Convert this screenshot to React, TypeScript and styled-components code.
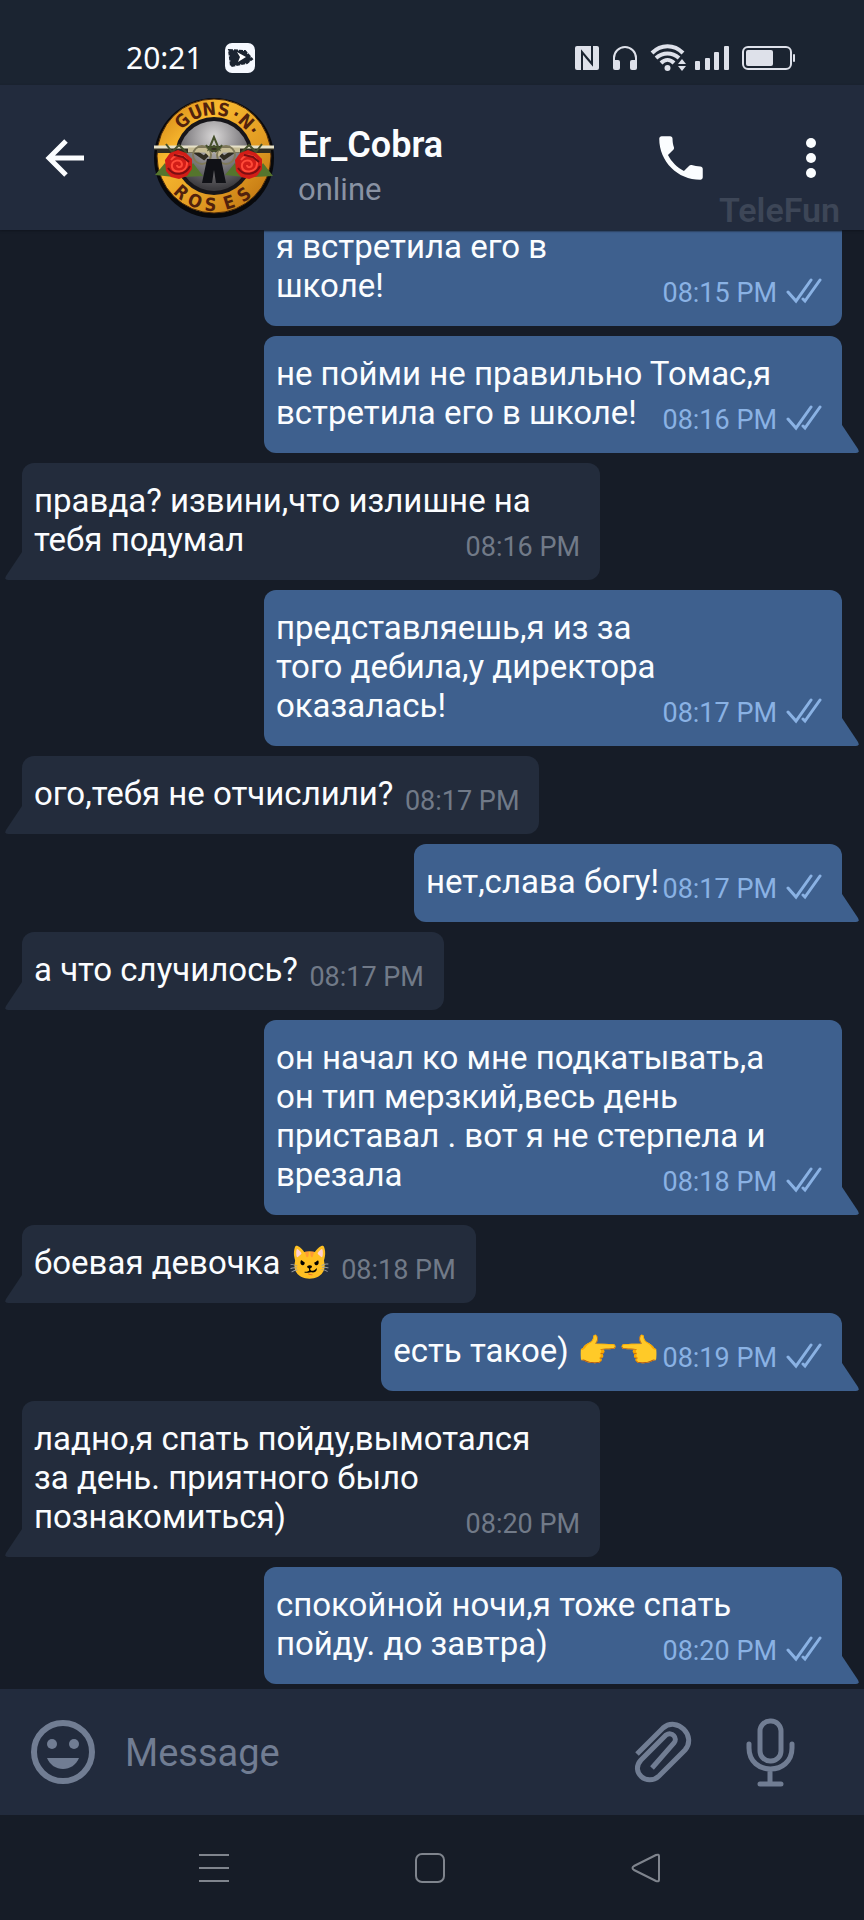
import React from "react";
import styled, { createGlobalStyle } from "styled-components";

const colors = {
  page: "#161c27",
  status: "#1b2431",
  bar: "#222b3d",
  incoming: "#232c3c",
  outgoing: "#3e608e",
  text: "#fbfdff",
  muted: "#717d93",
};

const GlobalStyle = createGlobalStyle`
  * { box-sizing: border-box; }
  body {
    margin: 0;
    background: ${colors.page};
    color: ${colors.text};
    font-family: Roboto, "Noto Sans", sans-serif;
  }
`;

const Screen = styled.div`
  display: flex;
  flex-direction: column;
  height: 100vh;
`;

const StatusBar = styled.div`
  display: flex;
  flex: none;
  align-items: center;
  justify-content: space-between;
  height: 85px;
  padding: 30px 68px 0 126px;
  background: ${colors.status};
`;

const StatusGroup = styled.div<{ $gap: number }>`
  display: flex;
  align-items: center;
  gap: ${({ $gap }) => $gap}px;
`;

const Clock = styled.time`
  font-family: "Noto Sans", sans-serif;
  font-size: 30px;
  line-height: 34px;
`;

const Header = styled.header`
  position: relative;
  z-index: 1;
  display: flex;
  flex: none;
  align-items: center;
  height: 145px;
  padding: 0 32px 0 36px;
  background: ${colors.bar};
  box-shadow: 0 1px 2px #10151e;
`;

const IconButton = styled.button`
  display: flex;
  flex: none;
  align-items: center;
  justify-content: center;
  padding: 0;
  border: 0;
  background: none;
  color: inherit;
`;

const Avatar = styled.svg`
  flex: none;
  margin-left: 62px;
`;

const Contact = styled.div`
  flex: 1;
  min-width: 0;
  margin-left: 24px;
  padding-top: 18px;
`;

const ContactName = styled.h1`
  margin: 0;
  font-size: 36px;
  font-weight: 600;
  line-height: 42px;
`;

const Presence = styled.p`
  margin: 0;
  padding-top: 4px;
  color: #8992a3;
  font-size: 31px;
  line-height: 40px;
`;

const HeaderActions = styled.div`
  display: flex;
  gap: 80px;
`;

const Watermark = styled.span`
  position: absolute;
  right: 24px;
  bottom: 0;
  color: #3d4657;
  font-size: 34px;
  font-weight: 600;
  line-height: 40px;
`;

const Scroller = styled.main`
  display: flex;
  flex: 1;
  flex-direction: column-reverse;
  min-height: 0;
  overflow-y: auto;
  scrollbar-width: none;
`;

const MessageList = styled.ol`
  display: flex;
  flex: none;
  flex-direction: column;
  gap: 10px;
  margin: 0;
  padding: 0 22px 5px;
  list-style: none;
`;

const Bubble = styled.li<{ $out: boolean; $wide: boolean }>`
  position: relative;
  display: grid;
  align-self: ${({ $out }) => ($out ? "flex-end" : "flex-start")};
  width: ${({ $wide }) => ($wide ? "70.5%" : "auto")};
  padding: 18px 20px 21px 12px;
  border-radius: 12px;
  background: ${({ $out }) => ($out ? colors.outgoing : colors.incoming)};
`;

const Tail = styled.svg<{ $out: boolean }>`
  position: absolute;
  bottom: 0;
  ${({ $out }) => ($out ? "right: -17px;" : "left: -17px; transform: scaleX(-1);")}
`;

const MessageText = styled.p<{ $reserve: number }>`
  grid-area: 1 / 1;
  justify-self: start;
  margin: 0;
  padding-right: ${({ $reserve }) => $reserve}px;
  font-size: 33px;
  line-height: 39px;
`;

const Meta = styled.div<{ $out: boolean }>`
  display: flex;
  grid-area: 1 / 1;
  align-items: flex-end;
  align-self: end;
  justify-self: end;
  gap: 9px;
  color: ${({ $out }) => ($out ? "#8ab2e4" : "#717a88")};
  font-size: 27px;
  line-height: 24px;
`;

const Composer = styled.form`
  display: flex;
  flex: none;
  align-items: center;
  height: 126px;
  padding: 0 68px 0 30px;
  background: ${colors.bar};
  color: ${colors.muted};
`;

const MessageInput = styled.input`
  flex: 1;
  min-width: 0;
  margin-left: 29px;
  padding: 2px 0 0;
  border: 0;
  outline: 0;
  background: none;
  color: ${colors.text};
  font-family: inherit;
  font-size: 38px;
  line-height: 44px;
  &::placeholder { color: ${colors.muted}; opacity: 1; }
`;

const ComposerActions = styled.div`
  display: flex;
  align-items: center;
  gap: 51px;
`;

const NavBar = styled.nav`
  display: flex;
  flex: none;
  align-items: center;
  justify-content: center;
  gap: 186px;
  height: 105px;
  padding-right: 4px;
  background: ${colors.page};
  color: #7f848d;
`;

type Message = { out?: boolean; time: string; lines: string[]; tail?: boolean };

const messages: Message[] = [
  { out: true, tail: false, time: "08:15 PM", lines: ["я встретила его в", "школе!"] },
  { out: true, time: "08:16 PM", lines: ["не пойми не правильно Томас,я", "встретила его в школе!"] },
  { time: "08:16 PM", lines: ["правда? извини,что излишне на", "тебя подумал"] },
  { out: true, time: "08:17 PM", lines: ["представляешь,я из за", "того дебила,у директора", "оказалась!"] },
  { time: "08:17 PM", lines: ["ого,тебя не отчислили?"] },
  { out: true, time: "08:17 PM", lines: ["нет,слава богу!"] },
  { time: "08:17 PM", lines: ["а что случилось?"] },
  {
    out: true,
    time: "08:18 PM",
    lines: ["он начал ко мне подкатывать,а", "он тип мерзкий,весь день", "приставал . вот я не стерпела и", "врезала"],
  },
  { time: "08:18 PM", lines: ["боевая девочка 😼"] },
  { out: true, time: "08:19 PM", lines: ["есть такое) 👉👈"] },
  { time: "08:20 PM", lines: ["ладно,я спать пойду,вымотался", "за день. приятного было", "познакомиться)"] },
  { out: true, time: "08:20 PM", lines: ["спокойной ночи,я тоже спать", "пойду. до завтра)"] },
];

function ReadTicks() {
  return (
    <svg width="36" height="28" viewBox="0 0 36 28" fill="none" stroke="currentColor" strokeWidth="3" strokeLinecap="round" role="img" aria-label="Read">
      <path d="m2 15 8 9L25 3M17 22l2 2L34 3" />
    </svg>
  );
}

function MessageBubble({ message }: { message: Message }) {
  const { out = false, tail = true, time, lines } = message;
  const wide = lines.length > 1;
  const reserve = wide ? 0 : out ? 163 : 126;
  return (
    <Bubble $out={out} $wide={wide}>
      <MessageText $reserve={reserve}>
        {lines.map((line, index) => (
          <React.Fragment key={index}>
            {index > 0 && <br />}
            {line}
          </React.Fragment>
        ))}
      </MessageText>
      <Meta $out={out}>
        <time>{time}</time>
        {out && <ReadTicks />}
      </Meta>
      {tail && (
        <Tail $out={out} width="30" height="28" viewBox="0 0 30 28" aria-hidden="true">
          <path d="M0 0H13L29 24Q31 28 27 28H0Z" fill={out ? colors.outgoing : colors.incoming} />
        </Tail>
      )}
    </Bubble>
  );
}

function Rose({ x }: { x: number }) {
  return (
    <g transform={`translate(${x} 68)`}>
      <path d="M-24 10-14-2-5 12ZM24 11 14-2 5 12Z" fill="#55752d" />
      <path d="M-14-5-9-12-1-15 7-12 13-6 13 4 8 11 0 14-8 12-13 6Z" fill="#d21d17" />
      <path d="M-8-5C-2-13 9-9 8-1 7 8-6 9-7 2-8-5 2-7 3-1 3 3-2 3-2 0" fill="none" stroke="#ff4a38" strokeWidth="2" />
      <path d="M-11 3C-5 12 7 10 11 1M-5-10 4-8 10-3" fill="none" stroke="#790e12" strokeWidth="2" />
    </g>
  );
}

const ringLetters: { char: string; angle: number; y: number }[] = [
  { char: "G", angle: -42, y: 14 },
  { char: "U", angle: -23, y: 14 },
  { char: "N", angle: -6, y: 14 },
  { char: "S", angle: 12, y: 14 },
  { char: "·", angle: 28, y: 14 },
  { char: "N", angle: 43, y: 14 },
  { char: "·", angle: 57, y: 14 },
  { char: "R", angle: 42, y: 110 },
  { char: "O", angle: 23, y: 110 },
  { char: "S", angle: 4, y: 110 },
  { char: "E", angle: -18, y: 110 },
  { char: "S", angle: -38, y: 110 },
];

function BandAvatar() {
  return (
    <Avatar width="120" height="122" viewBox="0 0 120 122" role="img" aria-label="Er_Cobra">
      <defs>
        <radialGradient id="skull" cx="50%" cy="22%" r="75%">
          <stop offset="0" stopColor="#d8d6d6" />
          <stop offset=".5" stopColor="#8b898c" />
          <stop offset="1" stopColor="#3c3b3f" />
        </radialGradient>
        <linearGradient id="gold" x2="1" y2="1">
          <stop offset="0" stopColor="#c9790f" />
          <stop offset=".3" stopColor="#f9b92f" />
          <stop offset=".65" stopColor="#e09a22" />
          <stop offset="1" stopColor="#b86a0c" />
        </linearGradient>
      </defs>
      <circle cx="60" cy="61" r="60" fill="#08090c" />
      <circle cx="60" cy="59" r="57" fill="url(#gold)" stroke="#4b2a0b" />
      <circle cx="60" cy="59" r="39" fill="#17161a" />
      <circle cx="60" cy="59" r="35" fill="url(#skull)" />
      <g fill="#51220d" fontFamily="DejaVu Sans Condensed, DejaVu Sans, sans-serif" fontSize="18" fontWeight="700" textAnchor="middle">
        {ringLetters.map(({ char, angle, y }) => (
          <text key={`${char}${angle}`} x="60" y={y + 4} transform={`rotate(${angle} 60 59)`}>
            {char}
          </text>
        ))}
      </g>
      <path d="M0 51H120M3 54H40L50 61 60 51 70 61 80 54H117" fill="none" stroke="#302c21" strokeWidth="4" />
      <path d="M0 50H44M76 50H120" stroke="#e6e1c8" strokeWidth="3" />
      <path d="M34 53h18l5 5M86 53H68l-5 5" fill="none" stroke="#c7bd95" strokeWidth="5" />
      <circle cx="48" cy="58" r="9" fill="none" stroke="#7f7959" strokeWidth="2" />
      <circle cx="72" cy="58" r="9" fill="none" stroke="#7f7959" strokeWidth="2" />
      <path d="m60 40-5 12 5-3 5 3Zm-8 8c5 8 11 8 16 0M12 47l6 8 7-7 8 8M108 47l-6 8-7-7-8 8" fill="none" stroke="#45502b" strokeWidth="2" />
      <path d="m53 62-5 24h10l2-13 2 13h10l-5-24Z" fill="#101116" />
      <Rose x={25} />
      <Rose x={95} />
    </Avatar>
  );
}

function StatusIcons() {
  return (
    <svg width="222" height="30" viewBox="0 0 222 30" role="img" aria-label="NFC, headphones, Wi-Fi, signal, battery">
      <g fill="#dee1ea">
        <rect x="1" y="3" width="24" height="24" rx="2" />
        <path d="M8 27V9l10 12M18 3v18l-6-7" fill="none" stroke={colors.status} strokeWidth="2" />
        <path d="M40 23V15a11 11 0 0 1 22 0v8" fill="none" stroke="#dee1ea" strokeWidth="2" />
        <rect x="39" y="17" width="7" height="10" rx="2" />
        <rect x="56" y="17" width="7" height="10" rx="2" />
        <g fill="none" stroke="#dee1ea" strokeWidth="4">
          <path d="M78 10c9-9 22-9 31 0M82 15c7-6 16-6 23 0M87 20c4-4 9-4 13 0" />
        </g>
        <circle cx="93.5" cy="25" r="3" />
        <path d="m108 16 4 5h-8ZM108 28l4-5h-8Z" />
        <rect x="121" y="18" width="5" height="9" rx="1" />
        <rect x="131" y="15" width="5" height="12" rx="1" />
        <rect x="140" y="9" width="5" height="18" rx="1" />
        <rect x="150" y="3" width="5" height="24" rx="1" />
        <rect x="169" y="4" width="48" height="22" rx="5" fill="none" stroke="#dee1ea" strokeWidth="2" />
        <rect x="172" y="7" width="27" height="16" rx="2" />
        <rect x="219" y="11" width="2" height="8" rx="1" />
      </g>
    </svg>
  );
}

export default function App() {
  return (
    <>
      <GlobalStyle />
      <Screen>
        <StatusBar>
          <StatusGroup $gap={22}>
            <Clock>20:21</Clock>
            <svg width="30" height="30" viewBox="0 0 30 30" aria-hidden="true">
              <rect width="30" height="30" rx="7" fill="#f6f9ff" />
              <path d="m4 7 16 1 7 8-5 4-16 3Z" fill="#1b2431" stroke="#1b2431" strokeWidth="2" strokeDasharray="4 1" />
              <path d="m12 9 9 5-8 5 2-5Z" fill="#fff" />
            </svg>
          </StatusGroup>
          <StatusIcons />
        </StatusBar>
        <Header>
          <IconButton aria-label="Back">
            <svg width="56" height="44" viewBox="0 0 56 44" fill="none" stroke="currentColor" strokeWidth="5" aria-hidden="true">
              <path d="M48 22H13M30 5 13 22l17 17" />
            </svg>
          </IconButton>
          <BandAvatar />
          <Contact>
            <ContactName>Er_Cobra</ContactName>
            <Presence>online</Presence>
          </Contact>
          <HeaderActions>
            <IconButton aria-label="Call">
              <svg width="58" height="58" viewBox="0 0 24 24" fill="currentColor" aria-hidden="true">
                <path d="M6.62 10.79c1.44 2.83 3.76 5.14 6.59 6.59l2.2-2.2c.27-.27.67-.36 1.02-.24 1.12.37 2.33.57 3.57.57.55 0 1 .45 1 1V20c0 .55-.45 1-1 1-9.39 0-17-7.61-17-17 0-.55.45-1 1-1h3.5c.55 0 1 .45 1 1 0 1.25.2 2.45.57 3.57.11.35.03.74-.25 1.02l-2.2 2.2z" />
              </svg>
            </IconButton>
            <IconButton aria-label="More options">
              <svg width="42" height="42" viewBox="0 0 42 42" fill="currentColor" aria-hidden="true">
                <circle cx="21" cy="6" r="5" />
                <circle cx="21" cy="21" r="5" />
                <circle cx="21" cy="36" r="5" />
              </svg>
            </IconButton>
          </HeaderActions>
          <Watermark>TeleFun</Watermark>
        </Header>
        <Scroller>
          <MessageList>
            {messages.map((message, index) => (
              <MessageBubble key={index} message={message} />
            ))}
          </MessageList>
        </Scroller>
        <Composer>
          <IconButton type="button" aria-label="Emoji">
            <svg width="66" height="66" viewBox="0 0 66 66" aria-hidden="true">
              <circle cx="33" cy="33" r="29" fill="none" stroke="currentColor" strokeWidth="6" />
              <circle cx="22" cy="25" r="5" fill="currentColor" />
              <circle cx="44" cy="25" r="5" fill="currentColor" />
              <path d="M17 39h32c-3 7-9 11-16 11s-13-4-16-11Z" fill="currentColor" />
            </svg>
          </IconButton>
          <MessageInput placeholder="Message" aria-label="Message" />
          <ComposerActions>
            <IconButton type="button" aria-label="Attach">
              <svg width="60" height="68" viewBox="0 0 60 68" fill="none" stroke="currentColor" strokeWidth="5" aria-hidden="true">
                <path d="M4 36 30 10C44-2 64 18 52 32L26 58C14 69-3 54 8 42L33 17C39 13 45 20 41 25L19 50" />
              </svg>
            </IconButton>
            <IconButton type="button" aria-label="Record voice">
              <svg width="52" height="70" viewBox="0 0 52 70" fill="none" stroke="currentColor" strokeWidth="5" strokeLinecap="round" aria-hidden="true">
                <rect x="16" y="4" width="21" height="40" rx="10" />
                <path d="M5 27v4c0 28 43 28 43 0v-4M26 53v14M16 67h21" />
              </svg>
            </IconButton>
          </ComposerActions>
        </Composer>
        <NavBar aria-label="System navigation">
          <IconButton aria-label="Recent apps">
            <svg width="30" height="30" viewBox="0 0 30 30" stroke="currentColor" strokeWidth="2" aria-hidden="true">
              <path d="M0 2h30M0 15h30M0 28h30" />
            </svg>
          </IconButton>
          <IconButton aria-label="Home">
            <svg width="30" height="30" viewBox="0 0 30 30" fill="none" stroke="currentColor" strokeWidth="2" aria-hidden="true">
              <rect x="1" y="1" width="28" height="28" rx="6" />
            </svg>
          </IconButton>
          <IconButton aria-label="Back">
            <svg width="30" height="30" viewBox="0 0 30 30" fill="none" stroke="currentColor" strokeWidth="2" strokeLinejoin="round" aria-hidden="true">
              <path d="M3 13 25 2q3-1 3 1v24q0 2-3 1L3 17q-3-2 0-4Z" />
            </svg>
          </IconButton>
        </NavBar>
      </Screen>
    </>
  );
}
